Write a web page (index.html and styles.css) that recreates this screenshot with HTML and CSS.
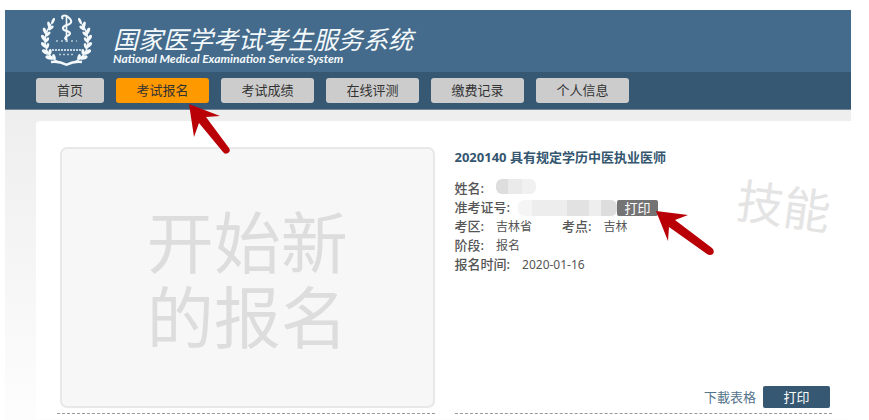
FILE: index.html
```html
<!DOCTYPE html>
<html lang="zh-CN">
<head>
<meta charset="utf-8">
<title>国家医学考试考生服务系统</title>
<link rel="stylesheet" href="styles.css">
</head>
<body>
<div class="page">
  <header class="header">
    <svg class="logo" viewBox="0 0 52 54" aria-hidden="true">
      <defs>
        <g id="branch">
          <path d="M10 10C4 19 2 28 6 37c2 5 6 8 11 11" fill="none" stroke="#e8f1f6" stroke-width="1.5"/>
          <g fill="#f4f9fc">
            <ellipse cx="12" cy="7" rx="1.4" ry="3.4" transform="rotate(25 12 7)"/>
            <ellipse cx="8" cy="11" rx="1.5" ry="3.6" transform="rotate(-15 8 11)"/>
            <ellipse cx="10" cy="14" rx="1.4" ry="3.2" transform="rotate(50 10 14)"/>
            <ellipse cx="4" cy="17" rx="1.7" ry="3.6" transform="rotate(-25 4 17)"/>
            <ellipse cx="7" cy="20" rx="1.5" ry="3.2" transform="rotate(45 7 20)"/>
            <ellipse cx="2.6" cy="24" rx="1.8" ry="3.6" transform="rotate(-35 2.6 24)"/>
            <ellipse cx="6" cy="26" rx="1.5" ry="3" transform="rotate(35 6 26)"/>
            <ellipse cx="2.8" cy="31" rx="1.8" ry="3.6" transform="rotate(-45 2.8 31)"/>
            <ellipse cx="6.5" cy="32" rx="1.5" ry="3" transform="rotate(20 6.5 32)"/>
            <ellipse cx="4.5" cy="38" rx="1.9" ry="4" transform="rotate(-60 4.5 38)"/>
            <ellipse cx="9" cy="38" rx="1.6" ry="3" transform="rotate(5 9 38)"/>
            <ellipse cx="8.5" cy="43.5" rx="2" ry="4.2" transform="rotate(-75 8.5 43.5)"/>
            <ellipse cx="13" cy="43" rx="1.6" ry="3" transform="rotate(-20 13 43)"/>
          </g>
          <path d="M10 48c5-1 10 0 16 3" fill="none" stroke="#f4f9fc" stroke-width="2.5"/>
        </g>
      </defs>
      <use href="#branch"/>
      <use href="#branch" transform="matrix(-1 0 0 1 51 0)"/>
      <path d="M25.5 1v27" stroke="#f4f9fc" stroke-width="1.6"/>
      <path d="M22 5c-3-3 2-5 5-2 4 3 5 6-1 8-6 2-5 5 0 6 5 2 3 4 0 5-3 2-2 3 0 4" fill="none" stroke="#f4f9fc" stroke-width="2"/>
      <path d="M15 27h21" stroke="#b4c9d7" stroke-width="1.5" stroke-dasharray="2 3"/>
      <path d="M11 36h30" stroke="#c6d8e4" stroke-width="2" stroke-dasharray="2 1"/>
      <path d="M18 40.5h16" stroke="#b4c9d7" stroke-width="1.6" stroke-dasharray="2 2"/>
    </svg>
    <div class="brand">
      <h1 class="brand-name">国家医学考试考生服务系统</h1>
      <p class="brand-sub">National Medical Examination Service System</p>
    </div>
  </header>
  <nav class="nav">
    <a class="tab tab-home" href="#">首页</a>
    <a class="tab active" href="#">考试报名
      <svg class="arrow arrow-tab" viewBox="0 0 44 54" aria-hidden="true"><path d="M1 1L32 13 18 14 41 45Q43 48 40 50 37 52 35 49L11 20 6 34Z" fill="#b90006"/></svg>
    </a>
    <a class="tab" href="#">考试成绩</a>
    <a class="tab" href="#">在线评测</a>
    <a class="tab" href="#">缴费记录</a>
    <a class="tab" href="#">个人信息</a>
  </nav>
  <div class="body">
    <main class="panel">
      <section class="cell">
        <button class="start" type="button">开始新<br>的报名</button>
      </section>
      <section class="cell record">
        <h2 class="record-title">2020140 具有规定学历中医执业医师</h2>
        <div class="record-main">
          <dl class="info">
            <div class="row"><dt>姓名:</dt><dd><span class="mask mask-name"></span></dd></div>
            <div class="row"><dt>准考证号:</dt><dd class="ticket"><span class="mask mask-number"></span><button class="mini" type="button">打印<svg class="arrow arrow-print" viewBox="0 0 60 46" aria-hidden="true"><path d="M1 1L33 5 20 10 57 38Q60 41 58 44 55 46 52 44L14 17 13 31Z" fill="#b90006"/></svg></button></dd></div>
            <div class="row"><dt>考区:</dt><dd>吉林省</dd><dt class="second">考点:</dt><dd>吉林</dd></div>
            <div class="row"><dt>阶段:</dt><dd>报名</dd></div>
            <div class="row"><dt>报名时间:</dt><dd>2020-01-16</dd></div>
          </dl>
          <span class="stamp">技能</span>
        </div>
        <div class="actions">
          <a class="download" href="#">下載表格</a>
          <button class="print" type="button">打印</button>
        </div>
      </section>
    </main>
  </div>
</div>
</body>
</html>
```
FILE: styles.css
```css
* {
  box-sizing: border-box;
}

body {
  margin: 0;
  background: #fff;
  color: #555;
  font: 13px/19px "Noto Sans", "Noto Sans CJK SC", sans-serif;
}

h1, h2, p, dl, dd {
  margin: 0;
}

button {
  border: 0;
  padding: 0;
  font: inherit;
  cursor: pointer;
}

a {
  text-decoration: none;
}

.page {
  display: flex;
  flex-direction: column;
  min-height: 100vh;
  padding: 10px 18px 0 5px;
}

.header {
  display: flex;
  gap: 20px;
  height: 62px;
  padding: 4px 36px 0;
  background: #446b8b;
}

.logo {
  width: 52px;
  height: 54px;
}

.brand {
  padding-top: 12px;
  color: #f4f9fc;
  font-style: italic;
}

.brand-name {
  font-size: 25px;
  font-weight: 400;
  line-height: 26px;
}

.brand-sub {
  font: italic 700 12px/14px Lato, sans-serif;
}

.nav {
  display: flex;
  gap: 12px;
  padding: 6px 31px;
  background: #365872;
  border-bottom: 1px solid #72889a;
}

.tab {
  position: relative;
  width: 93px;
  border-radius: 3px;
  background: #ccc;
  color: #333;
  line-height: 25px;
  text-align: center;
}

.tab-home {
  width: 68px;
}

.tab.active {
  background: #ff9900;
}

.arrow {
  position: absolute;
  z-index: 1;
}

.arrow-tab {
  left: 72px;
  top: 25px;
  width: 44px;
  height: 54px;
}

.arrow-print {
  left: 38px;
  top: 10px;
  width: 60px;
  height: 46px;
}

.body {
  flex: 1;
  padding: 11px 0 0 31px;
  background: linear-gradient(#eee, #fdfdfd);
}

.panel {
  display: grid;
  grid-template-columns: 1fr 1fr;
  gap: 20px;
  height: 100%;
  padding: 26px 19px 5px 21px;
  border-radius: 4px 0 0 0;
  background: #fff;
}

.cell {
  display: flex;
  flex-direction: column;
  padding-bottom: 5px;
  border-bottom: 1px dashed #999;
}

.start {
  flex: 1;
  min-height: 261px;
  margin-left: 3px;
  padding-top: 4px;
  border: 2px solid #e8e8e8;
  border-radius: 7px;
  background: #f7f7f7;
  color: #ddd;
  font-size: 67px;
  line-height: 75px;
}

.record-title {
  color: #34566f;
  font-size: 13px;
  line-height: 20px;
}

.record-main {
  display: flex;
  justify-content: space-between;
  padding-top: 12px;
}

.row {
  display: flex;
  gap: 12px;
  height: 19px;
}

dt {
  font-weight: 500;
}

dd {
  font-size: 12px;
}

.second {
  margin-left: 18px;
}

.ticket {
  display: flex;
  align-items: center;
  margin-left: -4px;
}

.mask {
  display: block;
  border-radius: 6px;
}

.mask-name {
  width: 40px;
  height: 15px;
  background: linear-gradient(90deg, #ddd 30%, #eaeaea 30% 65%, #f1f1f1 65%);
}

.mask-number {
  width: 99px;
  height: 16px;
  background: linear-gradient(90deg, #f5f5f5 14%, #ededed 14% 50%, #e2e2e2 50% 72%, #eee 72% 84%, #ddd 84%);
}

.mini {
  position: relative;
  width: 41px;
  height: 16px;
  border-radius: 2px;
  background: #747474;
  color: #fff;
  font-size: 13px;
  line-height: 16px;
}

.stamp {
  padding: 2px 4px 0 0;
  color: #e4e4e4;
  font-size: 47px;
  line-height: 50px;
  transform: rotate(8deg);
}

.actions {
  display: flex;
  justify-content: flex-end;
  align-items: center;
  gap: 7px;
  margin-top: auto;
  padding-right: 2px;
}

.download {
  color: #54738b;
}

.print {
  width: 67px;
  height: 22px;
  border-radius: 2px;
  background: #365872;
  color: #fff;
  line-height: 22px;
}
```
